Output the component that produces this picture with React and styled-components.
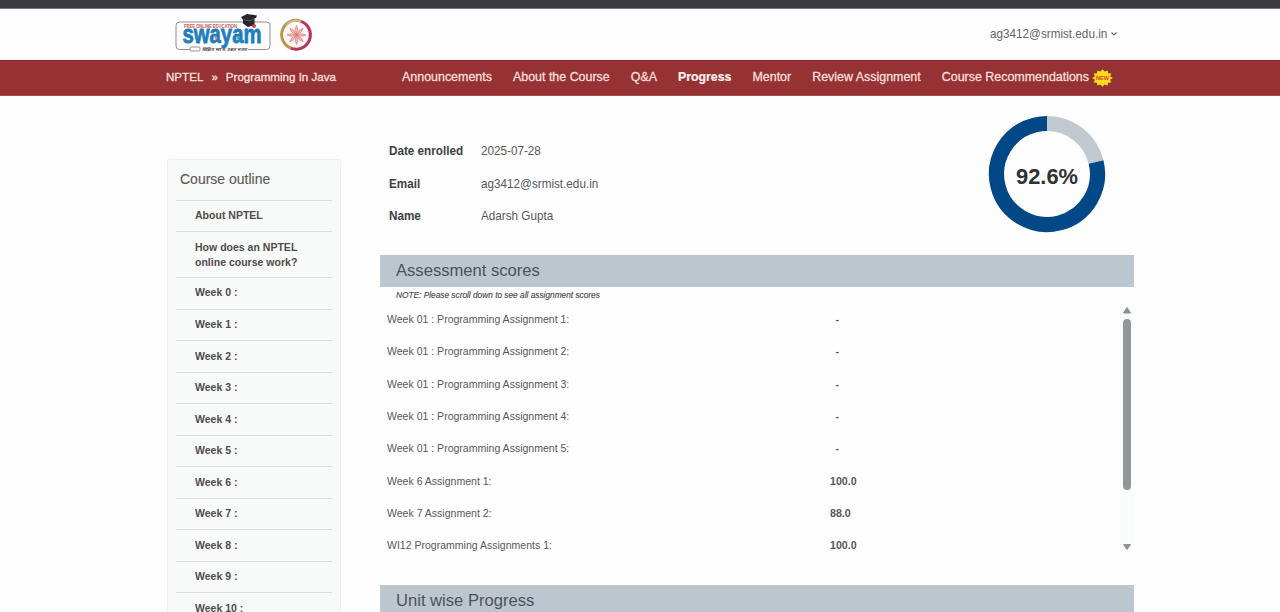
import React from "react";
import styled, { createGlobalStyle } from "styled-components";

const Global = createGlobalStyle`
  html, body { margin: 0; height: 612px; overflow: hidden; background: #fdfdfd; }
  * { box-sizing: border-box; }
  body { font-family: "Liberation Sans", Arial, sans-serif; font-size: 12.2px; color: #57585a; }
`;

const Page = styled.div`
  height: 612px;
  overflow: hidden;
  display: flex;
  flex-direction: column;
`;

const TopStrip = styled.div`
  flex: none;
  height: 9px;
  background: #3a3b3f;
  border-bottom: 1px solid #77787b;
`;

const Header = styled.header`
  flex: none;
  height: 51px;
  background: #fefefe;
  padding: 0 162px 0 170px;
  display: flex;
  justify-content: space-between;
`;

const Logos = styled.div`
  display: flex;
  svg { overflow: visible; }
`;

const Account = styled.div`
  display: flex;
  align-items: center;
  height: 49px;
  width: 128px;
  color: #636466;
`;

const AccountName = styled.div`
  width: 120px;
`;

const NavBar = styled.nav`
  flex: none;
  height: 36px;
  background: #963233;
  border-top: 1px solid #84292b;
  border-bottom: 1px solid #a5504f;
  color: #f7dfdc;
  display: flex;
  align-items: center;
  padding: 0 167px 3px 166px;
`;

const Crumbs = styled.div`
  display: flex;
  width: 236px;
  gap: 8px;
  font-size: 11.6px;
  -webkit-text-stroke: 0.35px currentColor;
`;

const Links = styled.div`
  display: flex;
  flex: 1;
  justify-content: space-between;
  align-items: center;
  padding-top: 1px;
  font-size: 12.45px;
`;

const NavLink = styled.span`
  display: flex;
  align-items: center;
  gap: 3px;
  height: 20px;
  white-space: nowrap;
  font-size: ${(p) => (p.$active ? "12.3px" : "inherit")};
  font-weight: ${(p) => (p.$active ? 700 : 400)};
  color: ${(p) => (p.$active ? "#fff3f0" : "inherit")};
  -webkit-text-stroke: ${(p) => (p.$active ? "0.2px" : "0.3px")} currentColor;
`;

const Columns = styled.div`
  display: flex;
  align-items: flex-start;
  padding-left: 167px;
`;

const Sidebar = styled.aside`
  width: 174px;
  height: 480px;
  margin-top: 63px;
  padding: 0 8px;
  background: #f8f9f9;
  border: 1px solid #eeefef;
  border-radius: 3px;
`;

const OutlineTitle = styled.div`
  height: 39.5px;
  line-height: 39px;
  padding-left: 4px;
  font-size: 14px;
  color: #5f5a58;
  -webkit-text-stroke: 0.15px currentColor;
`;

const OutlineItem = styled.div`
  height: ${(p) => (p.$tall ? 46 : 31.53)}px;
  border-top: 1px solid #dcdfe0;
  padding: 0 0 ${(p) => (p.$tall ? 0 : 0.6)}px 19px;
  display: flex;
  align-items: center;
`;

const Narrow = styled.span`
  display: inline-block;
  white-space: pre;
  transform: scaleX(${(p) => p.$x || 0.892});
  transform-origin: left center;
`;

const OutlineText = styled(Narrow)`
  font-size: 11.8px;
  font-weight: 700;
  line-height: 15px;
  color: #4f4c4b;
`;

const Main = styled.main`
  width: 754px;
  margin-left: 39px;
`;

const Summary = styled.section`
  height: 159px;
  display: flex;
  justify-content: space-between;
  padding: 19px 28px 0 9px;
`;

const Facts = styled.dl`
  margin: 20px 0 0;
  display: grid;
  grid-template-columns: 92px auto;
  grid-auto-rows: 32.5px;
  align-content: start;
  align-items: center;
`;

const Term = styled.dt`
  font-weight: 700;
  color: #3f4042;
`;

const Detail = styled.dd`
  margin: 0;
`;

const SectionTitle = styled.h2`
  margin: 0;
  height: 32px;
  line-height: 31px;
  padding-left: 16px;
  background: #bcc6ce;
  color: #4e5256;
  font-size: 16.6px;
  font-weight: 400;
`;

const Scores = styled.section`
  height: 298px;
  display: flex;
  justify-content: space-between;
  padding-right: 1px;
`;

const Note = styled.div`
  height: 16px;
  line-height: 17px;
  padding-left: 16px;
  font-size: 8.3px;
  font-style: italic;
  color: #4a4a4c;
  -webkit-text-stroke: 0.15px currentColor;
`;

const ScoreRow = styled.div`
  height: 32.3px;
  padding-left: 7px;
  display: grid;
  grid-template-columns: 443px 60px;
  align-items: center;
  font-size: 11.8px;
`;

const Score = styled(Narrow)`
  font-weight: 700;
  padding-left: ${(p) => (p.$dash ? 6 : 0)}px;
`;

const ScrollTrack = styled.div`
  width: 13px;
  height: 248px;
  margin-top: 18px;
  background: #fafbfb;
  display: flex;
  flex-direction: column;
  align-items: center;
`;

const Thumb = styled.div`
  width: 8px;
  height: 171px;
  margin: 4px 0 52px;
  border-radius: 4px;
  background: #959697;
`;

function SwayamLogo() {
  return (
    <svg width="106" height="46" viewBox="0 0 106 46">
      <rect x="6" y="13" width="94" height="27.5" rx="3.5" fill="#fdfdfe" stroke="#8d8f94" />
      <rect x="20" y="38" width="58" height="5" fill="#fefefe" />
      <text x="12.5" y="34" fontSize="25" fontWeight="700" fill="#1f7dbd" stroke="#1f7dbd" strokeWidth="0.8" textLength="79" lengthAdjust="spacingAndGlyphs">swayam</text>
      <text x="14" y="18.8" fontSize="5" fontWeight="700" fill="#d9534f" textLength="53" lengthAdjust="spacingAndGlyphs">FREE ONLINE EDUCATION</text>
      <path d="M71 8 L77 5 L87 6.5 L86 9 L84.5 9.5 V16 L78 18 L73 14.5 V11Z" fill="#26262b" />
      <path d="M74 10.5 L79.5 12 L85 9.5" fill="none" stroke="#77777d" strokeWidth="0.7" />
      <circle cx="84" cy="17" r="2" fill="#d93f4c" />
      <circle cx="46" cy="29" r="1.5" fill="#e58a3c" />
      <circle cx="68" cy="29" r="1.5" fill="#3fae8d" />
      <rect x="20" y="38" width="10" height="4" rx="1" fill="#fff" stroke="#777" strokeWidth="0.8" />
      <text x="32" y="42" fontSize="4.4" fontWeight="700" fontStyle="italic" fill="#444" textLength="45" lengthAdjust="spacingAndGlyphs">शिक्षित भारत, उन्नत भारत</text>
    </svg>
  );
}

function NptelSeal() {
  const rays = Array.from({ length: 8 }, (_, i) => i * 45);
  return (
    <svg width="42" height="46" viewBox="0 0 42 46">
      <circle cx="20.5" cy="26" r="15.3" fill="#fdfafa" stroke="#d9c3a8" strokeWidth="1" />
      <path d="M25 12.3 A14.3 14.3 0 0 0 15 39.2" fill="none" stroke="#bd954f" strokeWidth="3" />
      <path d="M25 12.3 A14.3 14.3 0 0 1 15 39.2" fill="none" stroke="#b5385c" strokeWidth="3" />
      <path d="M10.4 15.9 A14.3 14.3 0 0 1 25 12.3" fill="none" stroke="#d5b58a" strokeWidth="2" />
      {rays.map((a) => (
        <path key={a} d="M20.5 26 L19.2 20.5 L20.5 16.5 L21.8 20.5Z" fill="#f3bdb9" stroke="#d96a6c" strokeWidth="0.6" transform={`rotate(${a} 20.5 26)`} />
      ))}
    </svg>
  );
}

function NewBadge() {
  const pts = Array.from({ length: 24 }, (_, i) => {
    const a = (i * Math.PI) / 12;
    const k = i % 2 ? 0.76 : 1;
    return `${10.5 + 10.3 * k * Math.cos(a)},${10 + 8.8 * k * Math.sin(a)}`;
  }).join(" ");
  return (
    <svg width="21" height="19" viewBox="0 0 21 19">
      <polygon points={pts} fill="#f9dc1c" />
      <text x="4" y="12.1" fontSize="6" fontWeight="700" fill="#d6432b" stroke="none" textLength="13" lengthAdjust="spacingAndGlyphs">NEW</text>
    </svg>
  );
}

function Donut() {
  const r = 50.5;
  const c = 2 * Math.PI * r;
  const gray = (c * 76) / 360;
  return (
    <svg width="118" height="118" viewBox="0 0 118 118">
      <circle cx="59" cy="59" r={r} fill="none" stroke="#024887" strokeWidth="15.2" strokeDasharray={`${c - gray} ${c}`} transform="rotate(-14 59 59)" />
      <circle cx="59" cy="59" r={r} fill="none" stroke="#c0c9d0" strokeWidth="15.2" strokeDasharray={`${gray} ${c}`} transform="rotate(-90 59 59)" />
      <text x="59" y="68.5" textAnchor="middle" fontSize="22.3" fontWeight="700" fill="#303134" textLength="62" lengthAdjust="spacingAndGlyphs">92.6%</text>
    </svg>
  );
}

const weeks = Array.from({ length: 11 }, (_, i) => `Week ${i} :`);

const facts = [
  ["Date enrolled", "2025-07-28"],
  ["Email", "ag3412@srmist.edu.in"],
  ["Name", "Adarsh Gupta"],
];

const scores = [
  ["Week 01 : Programming Assignment 1:", "-"],
  ["Week 01 : Programming Assignment 2:", "-"],
  ["Week 01 : Programming Assignment 3:", "-"],
  ["Week 01 : Programming Assignment 4:", "-"],
  ["Week 01 : Programming Assignment 5:", "-"],
  ["Week 6 Assignment 1:", "100.0"],
  ["Week 7 Assignment 2:", "88.0"],
  ["WI12 Programming Assignments 1:", "100.0"],
];

export default function App() {
  return (
    <Page>
      <Global />
      <TopStrip />
      <Header>
        <Logos>
          <SwayamLogo />
          <NptelSeal />
        </Logos>
        <Account>
          <AccountName>
            <Narrow $x={0.96}>ag3412@srmist.edu.in</Narrow>
          </AccountName>
          <svg width="8" height="6" viewBox="0 0 8 6">
            <path d="M1.5 1.5 L4 4 L6.5 1.5" fill="none" stroke="#66676a" strokeWidth="1.2" />
          </svg>
        </Account>
      </Header>
      <NavBar>
        <Crumbs>
          <span>NPTEL</span>
          <span>»</span>
          <span>Programming In Java</span>
        </Crumbs>
        <Links>
          <NavLink>Announcements</NavLink>
          <NavLink>About the Course</NavLink>
          <NavLink>Q&amp;A</NavLink>
          <NavLink $active>Progress</NavLink>
          <NavLink>Mentor</NavLink>
          <NavLink>Review Assignment</NavLink>
          <NavLink>
            Course Recommendations
            <NewBadge />
          </NavLink>
        </Links>
      </NavBar>
      <Columns>
        <Sidebar>
          <OutlineTitle>Course outline</OutlineTitle>
          <OutlineItem>
            <OutlineText>About NPTEL</OutlineText>
          </OutlineItem>
          <OutlineItem $tall>
            <OutlineText>{"How does an NPTEL\nonline course work?"}</OutlineText>
          </OutlineItem>
          {weeks.map((w) => (
            <OutlineItem key={w}>
              <OutlineText>{w}</OutlineText>
            </OutlineItem>
          ))}
        </Sidebar>
        <Main>
          <Summary>
            <Facts>
              {facts.map(([term, detail]) => (
                <React.Fragment key={term}>
                  <Term><Narrow $x={0.96}>{term}</Narrow></Term>
                  <Detail><Narrow $x={0.96}>{detail}</Narrow></Detail>
                </React.Fragment>
              ))}
            </Facts>
            <Donut />
          </Summary>
          <SectionTitle>Assessment scores</SectionTitle>
          <Scores>
            <div>
              <Note>NOTE: Please scroll down to see all assignment scores</Note>
              {scores.map(([name, value]) => (
                <ScoreRow key={name}>
                  <Narrow>{name}</Narrow>
                  <Score $x={0.9} $dash={value === "-"}>{value}</Score>
                </ScoreRow>
              ))}
            </div>
            <ScrollTrack>
              <svg width="10" height="10" viewBox="0 0 10 10">
                <path d="M5 2.5 L8.5 8 H1.5Z" fill="#8f9092" stroke="#8f9092" strokeLinejoin="round" />
              </svg>
              <Thumb />
              <svg width="10" height="10" viewBox="0 0 10 10">
                <path d="M5 7.5 L8.5 2.5 H1.5Z" fill="#8f9092" stroke="#8f9092" strokeLinejoin="round" />
              </svg>
            </ScrollTrack>
          </Scores>
          <SectionTitle>Unit wise Progress</SectionTitle>
        </Main>
      </Columns>
    </Page>
  );
}
